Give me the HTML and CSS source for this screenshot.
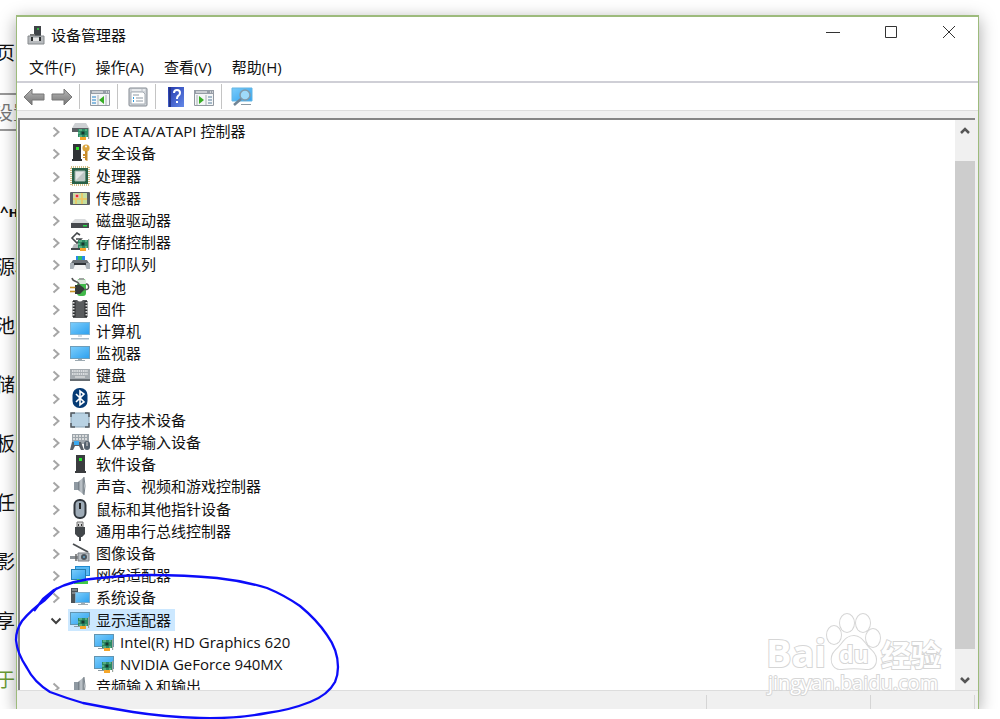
FILE: index.html
```html
<!DOCTYPE html>
<html lang="zh-CN">
<head>
<meta charset="utf-8">
<title>设备管理器</title>
<link rel="stylesheet" href="styles.css">
</head>
<body>
<svg class="defs" aria-hidden="true">
  <defs>
    <linearGradient id="blue" x1="0" y1="0" x2="1" y2="1"><stop offset="0" stop-color="#7accfb"/><stop offset="1" stop-color="#2fa2f0"/></linearGradient>
    <linearGradient id="arrow" x1="0" y1="0" x2="0" y2="1"><stop offset="0" stop-color="#b8b8b8"/><stop offset="1" stop-color="#757575"/></linearGradient>
    <linearGradient id="help" x1="0" y1="0" x2="1" y2="1"><stop offset="0" stop-color="#2439ad"/><stop offset="1" stop-color="#6388e8"/></linearGradient>
    <linearGradient id="cone" x1="0" y1="0" x2="1" y2="0"><stop offset="0" stop-color="#69737c"/><stop offset=".5" stop-color="#c6ccd1"/><stop offset="1" stop-color="#7b848b"/></linearGradient>
    <g id="card"><path d="M2 16h6v3H2z" fill="#f4a62a"/><path d="M0 8h10v8H0z" fill="#2b8a64"/><path d="M10 7h1.200v11H10z" fill="#9aa5a0"/><path d="M3.500 10.500h3v3h-3z" fill="#15372c"/><path d="M1 9h3M7 9h2M1 15h3M7 15h2M1 11v2" stroke="#83d0a0"/></g>
  </defs>
  <symbol id="chev" viewBox="0 0 12 12"><path d="M3.500 1.500 8.500 6l-5 4.500" fill="none" stroke="#a6a6a6" stroke-width="2"/></symbol>
  <symbol id="chev-down" viewBox="0 0 12 12"><path d="M1.500 3.500 6 8l4.500-4.500" fill="none" stroke="#404040" stroke-width="2"/></symbol>
  <symbol id="app" viewBox="0 0 20 20"><path d="M8 1h7v10H8z" fill="#3f4347"/><path d="M11 3h2v2h-2z" fill="#35b544"/><path d="M4 9h5v2H4z" fill="#777"/><path d="M2 11h16v8H2z" fill="#b8bbbe" stroke="#85898c"/><path d="M5 12h2v4H5zM13 12h2v4h-2z" fill="#2c2f31"/><path d="M7 13h6v3H7z" fill="#e5e5e5"/></symbol>
  <symbol id="ide" viewBox="0 0 20 20"><path d="M5 2h11l3 5H2z" fill="#cdd0d3"/><path d="M2 7h17v4H2z" fill="#5a5e62"/><use href="#card" x="8"/></symbol>
  <symbol id="security" viewBox="0 0 20 20"><path d="M3 1h8v15H3zM2 16h10v2H2z" fill="#303336"/><path d="M6 4h3v3H6z" fill="#2be22b"/><circle cx="16" cy="5" r="3.600" fill="#dba43c"/><circle cx="16" cy="3.500" r="1" fill="#fff"/><path d="M15 8h2.500v10l-2.500-1zM13 11h2v2h-2zM13 14h2v1h-2z" fill="#c88c2a"/></symbol>
  <symbol id="cpu" viewBox="0 0 20 20"><rect x="1" y="1" width="18" height="18" fill="none" stroke="#c5ab62" stroke-width="1.500" stroke-dasharray="1 1"/><path d="M2 2h16v16H2z" fill="#286047"/><path d="M5 5h10v10H5z" fill="#e4e7e6" stroke="#9bb3a8"/><path d="m6 14 8-8v8z" fill="#bfc6c4"/></symbol>
  <symbol id="sensor" viewBox="0 0 20 20"><rect y="4" width="20" height="13" rx="1" fill="#5a5f64"/><path d="M3 5h14v11H3z" fill="#c5dfa0"/><path d="M3 11h14M12 5v11M6 11v5" stroke="#f0c45c" stroke-width="1.500"/><path d="M5 6h4v4H5z" fill="#f4b4b0"/><circle cx="7" cy="8" r="1.300" fill="#e23030"/></symbol>
  <symbol id="disk" viewBox="0 0 20 20"><path d="M5 9h10l4 4H1z" fill="#d8dadc"/><path d="M1 13h18v5H1z" fill="#46494d"/><path d="M13 15h4v1.500h-4z" fill="#25d847"/></symbol>
  <symbol id="storage" viewBox="0 0 20 20"><path d="m10 3-3-2-5 5 5 5 4-4H6" fill="none" stroke="#44484b" stroke-width="1.600"/><path d="M4 12h7v4H2z" fill="#b5b9bc"/><path d="M1 16h9v2H1z" fill="#42464a"/><use href="#card" x="8"/></symbol>
  <symbol id="printer" viewBox="0 0 20 20"><path d="M6 2h9v5H6z" fill="#2988ea"/><path d="M8 2h4v4H8z" fill="#30bd68"/><path d="M3 6h14l2 3H1z" fill="#6b7075"/><path d="M0 9h20v6H0z" fill="#aab1b7"/><path d="M4 9h12v2H4z" fill="#303438"/><path d="M5 11h10l2 5H3z" fill="#f4f4f4"/></symbol>
  <symbol id="battery" viewBox="0 0 20 20"><rect x="7" y="2" width="9" height="17" rx="3" fill="#41b94a"/><path d="M7 3h9v4H7z" fill="#dce8dc"/><path d="M9 1h5v2H9z" fill="#9ea59f"/><path d="M2 1c1 5 7 2 7 7M13 12c8 3 6-6 3-5" fill="none" stroke="#555" stroke-width="1.500"/><path d="M5 8h5l4 3v2l-4 4H5z" fill="#363b39"/><path d="M0 10h5v1H0zM0 14h5v1H0z" fill="#c99626" stroke="#c99626" stroke-width=".6"/></symbol>
  <symbol id="firmware" viewBox="0 0 20 20"><path d="M3 1h4q3 3 6 0h4v18H3z" fill="#5a5c5e"/><path d="M4 2v16M16 2v16" stroke="#2d2f31" stroke-width="3"/><path d="M3.500 3v15M16.500 3v15" stroke="#ddd" stroke-width="2" stroke-dasharray="1.500 1.500"/></symbol>
  <symbol id="computer" viewBox="0 0 20 20"><path d="M0 1h20v13H0z" fill="#7fb4d4"/><path d="M1 2h18v11H1z" fill="url(#blue)"/><path d="M8 14h4v2H8z" fill="#d5dee5"/><path d="M1 17h18v1.500H1z" fill="#a9bac7"/></symbol>
  <symbol id="monitor" viewBox="0 0 20 20"><path d="M0 3h20v13H0z" fill="#6d9dba"/><path d="M1 4h18v11H1z" fill="url(#blue)"/><path d="M8 16h4v1h3v1H5v-1h3z" fill="#9eabb3"/></symbol>
  <symbol id="keyboard" viewBox="0 0 20 20"><path d="M0 4h20v11H0z" fill="#a5abb0"/><path d="M2 6h16M2 9h16" stroke="#eceeef" stroke-width="1.300" stroke-dasharray="1.500 .7"/><path d="M5 12h10" stroke="#eee"/><path d="M0 14h20v2H0z" fill="#686e73"/></symbol>
  <symbol id="bluetooth" viewBox="0 0 20 20"><rect x="2.500" y="0" width="15" height="20" rx="7" fill="#063b75"/><path d="m6 6 8 8-4 3V3l4 3-8 8" fill="none" stroke="#fff" stroke-width="1.600"/></symbol>
  <symbol id="memory" viewBox="0 0 20 20"><rect x="1" y="3" width="18" height="14" rx="1" fill="#b9d2e3" stroke="#89a3b5"/><path d="M1 7V3h4M15 3h4v4M1 13v4h4M15 17h4v-4" fill="none" stroke="#555b60" stroke-width="1.500"/></symbol>
  <symbol id="hid" viewBox="0 0 20 20"><path d="M2 2h17v10H2z" fill="#9da5ab"/><path d="M3 4h15M3 7h15" stroke="#eee" stroke-width="1.500" stroke-dasharray="2 1"/><path d="M0 18 2 10h9l3 8h-3l-2-4H5l-2 4z" fill="#596068"/><path d="M4 9h5v4H4z" fill="#3caaf1"/><rect x="14" y="9" width="6" height="9" rx="3" fill="#54616d"/><path d="M17 10v4" stroke="#ddd"/></symbol>
  <symbol id="software" viewBox="0 0 20 20"><path d="M6 1h9v16H6zM5 17h11v2H5z" fill="#3a3c3f"/><path d="M9 4h3v3H9z" fill="#29e62f"/></symbol>
  <symbol id="speaker" viewBox="0 0 20 20"><path d="M4 6h4v8H4z" fill="#8f99a2"/><path d="m8 6 6-5v18l-6-5z" fill="url(#cone)"/><path d="M14 1q2 9 0 18" fill="none" stroke="#7a848c"/></symbol>
  <symbol id="mouse" viewBox="0 0 20 20"><rect x="4.500" y="1" width="11" height="18" rx="5" fill="#9eabb7" stroke="#30363d" stroke-width="2"/><path d="M10 4v6" stroke="#222" stroke-width="2"/></symbol>
  <symbol id="usb" viewBox="0 0 20 20"><path d="M7 1h6v5H7z" fill="#d6d6d6" stroke="#777"/><path d="M8 3h1v2H8zM11 3h1v2h-1z" fill="#333"/><path d="M5 6h10v7l-3 3H8l-3-3zM9 15h2v5H9z" fill="#42464a"/></symbol>
  <symbol id="imaging" viewBox="0 0 20 20"><path d="m3 1 15 8" stroke="#4c5053" stroke-width="1.800"/><path d="M0 13h8v3H0z" fill="#8d9297"/><path d="M8 10h11v8H8z" fill="#b7bcc0" stroke="#7a7f84"/><circle cx="14" cy="14" r="3" fill="#4c555d"/><circle cx="14" cy="14" r="1" fill="#5fa4ca"/><path d="M6 11v7" stroke="#666" stroke-width="1.500"/></symbol>
  <symbol id="network" viewBox="0 0 20 20"><path d="M5 1h15v10H5z" fill="#218bd0"/><path d="M6 2h13v8H6z" fill="#59baf4"/><path d="M1 4h15v11H1z" fill="#287eaf"/><path d="M2 5h13v9H2z" fill="url(#blue)"/><path d="M7 14h5v2h6v3H4v-3h3z" fill="#42c947"/></symbol>
  <symbol id="system" viewBox="0 0 20 20"><path d="M1 1h7v15H1z" fill="#4c5358"/><path d="M2 3h5M2 6h4" stroke="#aeb5ba"/><path d="M5 5h15v11H5z" fill="#7caccc"/><path d="M6 6h13v9H6z" fill="url(#blue)"/><path d="M11 16h4v1h3v1H8v-1h3z" fill="#a0abb2"/></symbol>
  <symbol id="display" viewBox="0 0 20 20"><path d="M0 2h20v13H0z" fill="#6294b0"/><path d="M1 3h18v11H1z" fill="url(#blue)"/><path d="M4 16h6v1H4z" fill="#8c999f"/><use href="#card" x="8"/></symbol>
  <symbol id="back" viewBox="0 0 22 20"><path d="m1 10 8-8v5h12v6H9v5z" fill="url(#arrow)" stroke="#777"/></symbol>
  <symbol id="fwd" viewBox="0 0 22 20"><path d="m21 10-8-8v5H1v6h12v5z" fill="url(#arrow)" stroke="#777"/></symbol>
  <symbol id="tree-pane" viewBox="0 0 22 20"><path d="M1.500 3.500h19v15h-19z" fill="#f4f6f7" stroke="#9298a0"/><path d="M1 3h20v4H1z" fill="#969da6"/><path d="M3 5h11M17 5h1M19 5h1" stroke="#fff"/><path d="M3 10h4M3 13h4M3 16h4" stroke="#66a8d9" stroke-width="1.500"/><path d="M9 8v10M17 8v10" stroke="#aab0b6"/><path d="m15 9-5 4 5 4z" fill="#37ad24"/></symbol>
  <symbol id="props" viewBox="0 0 22 20"><rect x="2" y="1" width="18" height="18" rx="1" fill="#d0d4d9" stroke="#858b93"/><path d="M4 5h12l2 2v10H4z" fill="#fff" stroke="#a6adb4"/><path d="M6 8h6M9 11h7M9 14h7" stroke="#8d98a3"/><path d="M6 11h1M6 14h1" stroke="#299be0" stroke-width="2"/><path d="M5 3h9M16 3h2" stroke="#fff"/></symbol>
  <symbol id="question" viewBox="0 0 22 20"><path d="M3 0h16v20H3z" fill="url(#help)"/><path d="M5 0v20" stroke="#233489" stroke-width="2"/><path d="M9 6q0-3 3-3t3 3q0 2-2 3-1 1-1 3" fill="none" stroke="#fff" stroke-width="2"/><path d="M11 14h2v2h-2z" fill="#fff"/></symbol>
  <symbol id="action-pane" viewBox="0 0 22 20"><path d="M1.500 3.500h19v15h-19z" fill="#f4f6f7" stroke="#9298a0"/><path d="M1 3h20v4H1z" fill="#969da6"/><path d="M3 5h11M17 5h1M19 5h1" stroke="#fff"/><path d="M15 10h4M15 13h4M15 16h4" stroke="#8aa5bb" stroke-width="1.500"/><path d="M4 8v10M13 8v10" stroke="#aab0b6"/><path d="m6 9 5 4-5 4z" fill="#37ad24"/></symbol>
  <symbol id="scan" viewBox="0 0 22 20"><path d="M1 1h20v13H1z" fill="url(#blue)" stroke="#64b5e3"/><path d="M10 17h10v1H10z" fill="#8b99a3"/><circle cx="14" cy="8" r="5" fill="#9edaf9" stroke="#8399a7" stroke-width="1.500"/><path d="m10 12-7 6" stroke="#718494" stroke-width="2.500"/></symbol>
</svg>

<div class="desktop">
  <aside class="settings">
    <div class="settings-home">页</div>
    <input class="settings-search" value="设置" aria-label="查找设置" readonly>
    <div class="settings-heading">^н</div>
    <ul class="settings-list">
      <li>源和</li><li>池</li><li>储</li><li>板</li><li>任务</li><li>影</li><li>享</li><li class="current">于</li>
    </ul>
  </aside>

  <main class="window">
    <header class="titlebar">
      <svg class="icon"><use href="#app"/></svg>
      <h1>设备管理器</h1>
      <div class="controls">
        <button aria-label="最小化"><svg viewBox="0 0 14 14"><path d="M0 7.500h14"/></svg></button>
        <button aria-label="最大化"><svg viewBox="0 0 14 14"><path d="M1.500 1.500h11v11h-11z"/></svg></button>
        <button aria-label="关闭"><svg viewBox="0 0 14 14"><path d="m1 1 12 12M13 1 1 13"/></svg></button>
      </div>
    </header>
    <nav class="menubar">
      <button>文件(F)</button><button>操作(A)</button><button>查看(V)</button><button>帮助(H)</button>
    </nav>
    <div class="toolbar">
      <button aria-label="后退"><svg><use href="#back"/></svg></button>
      <button aria-label="前进"><svg><use href="#fwd"/></svg></button>
      <span class="sep"></span>
      <button aria-label="显示控制台树"><svg><use href="#tree-pane"/></svg></button>
      <span class="sep"></span>
      <button aria-label="属性"><svg><use href="#props"/></svg></button>
      <span class="sep"></span>
      <button aria-label="帮助"><svg><use href="#question"/></svg></button>
      <button aria-label="操作窗格"><svg><use href="#action-pane"/></svg></button>
      <span class="sep"></span>
      <button aria-label="扫描检测硬件改动"><svg><use href="#scan"/></svg></button>
    </div>
    <section class="pane">
      <ul class="tree">
        <li><svg class="chev"><use href="#chev"/></svg><span class="node"><svg class="icon"><use href="#ide"/></svg>IDE ATA/ATAPI 控制器</span></li>
        <li><svg class="chev"><use href="#chev"/></svg><span class="node"><svg class="icon"><use href="#security"/></svg>安全设备</span></li>
        <li><svg class="chev"><use href="#chev"/></svg><span class="node"><svg class="icon"><use href="#cpu"/></svg>处理器</span></li>
        <li><svg class="chev"><use href="#chev"/></svg><span class="node"><svg class="icon"><use href="#sensor"/></svg>传感器</span></li>
        <li><svg class="chev"><use href="#chev"/></svg><span class="node"><svg class="icon"><use href="#disk"/></svg>磁盘驱动器</span></li>
        <li><svg class="chev"><use href="#chev"/></svg><span class="node"><svg class="icon"><use href="#storage"/></svg>存储控制器</span></li>
        <li><svg class="chev"><use href="#chev"/></svg><span class="node"><svg class="icon"><use href="#printer"/></svg>打印队列</span></li>
        <li><svg class="chev"><use href="#chev"/></svg><span class="node"><svg class="icon"><use href="#battery"/></svg>电池</span></li>
        <li><svg class="chev"><use href="#chev"/></svg><span class="node"><svg class="icon"><use href="#firmware"/></svg>固件</span></li>
        <li><svg class="chev"><use href="#chev"/></svg><span class="node"><svg class="icon"><use href="#computer"/></svg>计算机</span></li>
        <li><svg class="chev"><use href="#chev"/></svg><span class="node"><svg class="icon"><use href="#monitor"/></svg>监视器</span></li>
        <li><svg class="chev"><use href="#chev"/></svg><span class="node"><svg class="icon"><use href="#keyboard"/></svg>键盘</span></li>
        <li><svg class="chev"><use href="#chev"/></svg><span class="node"><svg class="icon"><use href="#bluetooth"/></svg>蓝牙</span></li>
        <li><svg class="chev"><use href="#chev"/></svg><span class="node"><svg class="icon"><use href="#memory"/></svg>内存技术设备</span></li>
        <li><svg class="chev"><use href="#chev"/></svg><span class="node"><svg class="icon"><use href="#hid"/></svg>人体学输入设备</span></li>
        <li><svg class="chev"><use href="#chev"/></svg><span class="node"><svg class="icon"><use href="#software"/></svg>软件设备</span></li>
        <li><svg class="chev"><use href="#chev"/></svg><span class="node"><svg class="icon"><use href="#speaker"/></svg>声音、视频和游戏控制器</span></li>
        <li><svg class="chev"><use href="#chev"/></svg><span class="node"><svg class="icon"><use href="#mouse"/></svg>鼠标和其他指针设备</span></li>
        <li><svg class="chev"><use href="#chev"/></svg><span class="node"><svg class="icon"><use href="#usb"/></svg>通用串行总线控制器</span></li>
        <li><svg class="chev"><use href="#chev"/></svg><span class="node"><svg class="icon"><use href="#imaging"/></svg>图像设备</span></li>
        <li><svg class="chev"><use href="#chev"/></svg><span class="node"><svg class="icon"><use href="#network"/></svg>网络适配器</span></li>
        <li><svg class="chev"><use href="#chev"/></svg><span class="node"><svg class="icon"><use href="#system"/></svg>系统设备</span></li>
        <li><svg class="chev"><use href="#chev-down"/></svg><span class="node selected"><svg class="icon"><use href="#display"/></svg>显示适配器</span></li>
        <li class="child"><span class="node"><svg class="icon"><use href="#display"/></svg>Intel(R) HD Graphics 620</span></li>
        <li class="child"><span class="node"><svg class="icon"><use href="#display"/></svg>NVIDIA GeForce 940MX</span></li>
        <li class="partial"><svg class="chev"><use href="#chev"/></svg><span class="node"><svg class="icon"><use href="#speaker"/></svg>音频输入和输出</span></li>
      </ul>
      <div class="scrollbar">
        <button aria-label="向上滚动"><svg viewBox="0 0 12 12"><path d="m2 8 4-4 4 4"/></svg></button>
        <div class="track"><div class="thumb"></div></div>
        <button aria-label="向下滚动"><svg viewBox="0 0 12 12"><path d="m2 4 4 4 4-4"/></svg></button>
      </div>
    </section>
    <footer class="statusbar"><span></span><span></span><span></span></footer>
  </main>
</div>

<svg class="watermark" viewBox="0 0 190 100" aria-hidden="true">
  <g class="outline">
    <ellipse cx="74" cy="33" rx="7" ry="9"/><ellipse cx="87" cy="21" rx="7" ry="9"/><ellipse cx="103" cy="21" rx="7" ry="9"/><ellipse cx="113" cy="36" rx="7" ry="9"/>
    <path d="M94 34c8 0 11 9 17 14 9 8 5 20-5 19-8-1-16-1-24 0-10 1-14-11-6-19 7-6 9-14 18-14z"/>
    <text class="brand" x="6" y="65">Bai</text>
    <text class="du" x="79" y="61">du</text>
    <text class="cn" x="121" y="64">经验</text>
    <text class="site" x="8" y="88">jingyan.baidu.com</text>
  </g>
</svg>
<svg class="annotation" viewBox="0 0 360 150" aria-hidden="true">
  <path d="M34 41 43 29 54 20Q72 10 100 8Q125 5 150 5Q185 5 217 8Q244 11 267 18Q284 25 300 36Q317 50 327 65Q338 80 338 97Q338 105 335 112Q328 125 310 132Q290 140 267 143Q235 149 200 148Q165 147 133 142Q108 138 83 133Q66 128 50 122Q34 112 27 98Q17 83 16 70Q16 60 22 51Q31 40 45 30L57 18"/>
</svg>
</body>
</html>
```
FILE: styles.css
```css
* { box-sizing: border-box; }

body {
  margin: 0;
  height: 100vh;
  overflow: hidden;
  position: relative;
  background: #fff;
  color: #111;
  font: 15px/20px "Open Sans", "Noto Sans CJK SC", sans-serif;
}

button {
  border: 0;
  padding: 0;
  background: none;
  color: inherit;
  font: inherit;
}

ul { list-style: none; margin: 0; padding: 0; }

.defs { position: absolute; width: 0; height: 0; }

.desktop {
  display: flex;
  height: calc(100% - 10px);
  padding-right: 21px;
  overflow: hidden;
}

.settings {
  display: flex;
  flex-direction: column;
  flex: 0 0 16px;
  min-width: 0;
  overflow: hidden;
  white-space: nowrap;
  font-size: 19px;
}

.settings-home { margin: 33px 0 20px -4px; line-height: 40px; }

.settings-search {
  flex: none;
  width: 60px;
  height: 38px;
  margin-left: -12px;
  padding: 0 4px;
  border: 2px solid #999;
  background: #fff;
  color: #777;
  font: inherit;
}

.settings-heading { margin-top: 70px; font-size: 15px; font-weight: bold; }

.settings-list {
  display: flex;
  flex-direction: column;
  flex: 1;
  margin-top: 16px;
}

.settings-list li { display: flex; flex: 1; align-items: center; margin-left: -4px; }
.settings-list .current { color: #6b9c35; }

.window {
  display: flex;
  flex-direction: column;
  flex: 1;
  min-width: 0;
  margin-top: 15px;
  border: 1px solid #9dbb7c;
  border-top-width: 2px;
  border-bottom: 0;
  background: #fff;
  box-shadow: 0 4px 16px rgba(0, 0, 0, 0.35);
}

.icon { flex: none; width: 20px; height: 20px; }

.titlebar { display: flex; align-items: center; height: 36px; padding-left: 9px; }
.titlebar h1 { margin: 0 0 0 5px; font-size: 15px; font-weight: normal; }

.controls { display: flex; align-self: flex-start; margin-left: auto; }
.controls button { width: 58px; height: 32px; }
.controls svg { width: 14px; height: 14px; fill: none; stroke: #333; }

.menubar {
  display: flex;
  gap: 20px;
  height: 30px;
  padding-left: 12px;
  border-bottom: 2px solid #cfcfd6;
}

.toolbar {
  display: flex;
  align-items: center;
  height: 28px;
  padding-left: 3px;
  border-bottom: 1px solid #ddd;
}

.toolbar button { width: 28px; height: 20px; }
.toolbar svg { display: block; width: 22px; height: 20px; margin: 0 auto; }
.sep { width: 1px; height: 25px; margin: 0 6px 0 3px; background: #c4c4c4; }

.pane {
  display: flex;
  flex: 1;
  min-height: 0;
  border-style: solid;
  border-color: #858585;
  border-width: 2px 0 0 2px;
  margin: 7px 3px 0 1px;
  box-shadow: 0 0 0 8px #f0f0f0;
  clip-path: inset(-7px -3px 0 -1px);
}

.tree { display: flex; flex-direction: column; flex: 1; min-width: 0; background: #fff; }

.tree li {
  display: flex;
  align-items: center;
  flex: 1 1 0;
  min-height: 0;
  padding-left: 30px;
}

.tree .child { padding-left: 72px; }
.tree .partial { flex: 0 0 15px; align-items: flex-start; overflow: hidden; }

.chev { flex: none; width: 12px; height: 12px; margin: 2px 6px 0 0; }
.partial .chev { margin-top: 7px; }

.node {
  display: flex;
  align-items: center;
  gap: 6px;
  height: 22px;
  padding: 0 4px 0 2px;
  white-space: nowrap;
}

.selected { background: #cce8ff; }

.scrollbar { display: flex; flex-direction: column; width: 20px; background: #f0f0f0; }
.scrollbar button { height: 21px; }
.scrollbar svg { width: 12px; height: 12px; fill: none; stroke: #555; stroke-width: 2.5; }
.track { display: flex; flex: 1; padding: 20px 0; }
.thumb { flex: 1; background: #cdcdcd; }

.statusbar {
  display: flex;
  justify-content: flex-end;
  height: 19px;
  padding-top: 4px;
  border-top: 1px solid #ddd;
  background: #f0f0f0;
}

.statusbar span { border-left: 1px solid #d5d5d5; width: 164px; }
.statusbar span:nth-child(2) { width: 104px; }
.statusbar span:last-child { width: 4px; }

.annotation { position: absolute; left: 0; top: 570px; width: 360px; height: 150px; }
.annotation path { fill: none; stroke: #0c0cfa; stroke-width: 2.3; stroke-linejoin: round; }

.watermark { position: absolute; left: 760px; top: 602px; width: 190px; height: 100px; }
.outline { fill: #fff; stroke: #d6d6d6; stroke-width: 2; paint-order: stroke; }
.outline text { font-family: "Open Sans", "Noto Sans CJK SC", sans-serif; font-weight: bold; }
.outline .brand { font-size: 38px; }
.outline .du { font-size: 23px; }
.outline .cn { font-size: 30px; }
.outline .site { font-size: 20px; font-weight: normal; }
```
